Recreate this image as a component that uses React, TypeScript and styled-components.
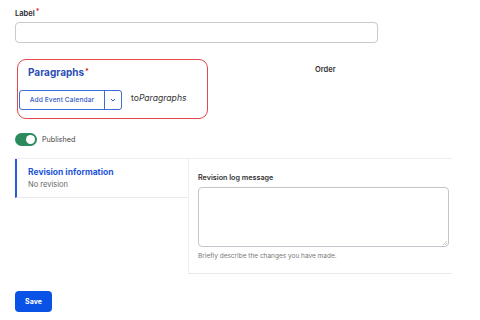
import styled, { createGlobalStyle } from "styled-components"

const GlobalStyle = createGlobalStyle`
  body {
    margin: 0;
    background: #fff;
    font-family: Inter, "Noto Sans", sans-serif;
    color: #222330;
  }
`

const Page = styled.div`
  width: 480px;
  height: 320px;
  padding: 7px 0 0 15px;
  box-sizing: border-box;
  overflow: hidden;
`

const FieldLabel = styled.div`
  font-size: 7.5px;
  font-weight: 600;
  line-height: 10px;
  color: #232429;
`

const Required = styled.span`
  color: #d72222;
  font-size: 7px;
  margin-left: 1px;
  vertical-align: 2px;
`

const TextInput = styled.div`
  margin-top: 3px;
  width: 363px;
  height: 21px;
  box-sizing: border-box;
  border: 1px solid #c9c9cf;
  border-radius: 4px;
`

const ParagraphsRow = styled.div`
  margin-top: 16px;
  display: flex;
  align-items: flex-start;
`

const Highlight = styled.div`
  margin-left: 2px;
  width: 191px;
  height: 60px;
  box-sizing: border-box;
  border: 1.3px solid #e2484e;
  border-radius: 9px;
  padding: 6px 0 0 1px;
`

const TableHeading = styled.div`
  font-size: 10px;
  font-weight: 700;
  color: #2a4db8;
  margin-left: 9px;
  line-height: 12px;
`

const AddRow = styled.div`
  margin-top: 12px;
  display: flex;
  align-items: flex-start;
  gap: 9px;
`

const ButtonGroup = styled.div`
  display: flex;
  width: 103px;
  height: 20px;
  box-sizing: border-box;
  border: 1.3px solid #3a6fd8;
  border-radius: 3px;
`

const AddButton = styled.div`
  flex: 1;
  display: flex;
  align-items: center;
  justify-content: center;
  font-size: 6.6px;
  font-weight: 500;
  letter-spacing: 0.1px;
  color: #2f5cc4;
  border-right: 1px solid #3a6fd8;
`

const ToggleButton = styled.div`
  width: 16px;
  display: flex;
  align-items: center;
  justify-content: center;
  color: #2f5cc4;
`

const ToText = styled.div`
  font-size: 8.6px;
  color: #333;
  margin-top: 3px;
  em {
    font-style: italic;
  }
`

const OrderHeading = styled.div`
  margin-left: 107px;
  margin-top: 6px;
  font-size: 7.5px;
  font-weight: 600;
  color: #333;
`

const StatusRow = styled.div`
  margin-top: 14px;
  display: flex;
  align-items: center;
  gap: 5px;
  font-size: 7.2px;
  color: #444;
`

const Switch = styled.div<{ $on: boolean }>`
  width: 22px;
  height: 13px;
  border-radius: 7px;
  background: ${p => (p.$on ? "#2b8a5e" : "#ccc")};
  position: relative;
  &::after {
    content: "";
    position: absolute;
    top: 2px;
    left: ${p => (p.$on ? "11px" : "2px")};
    width: 9px;
    height: 9px;
    border-radius: 50%;
    background: #fff;
  }
`

const Tabs = styled.div`
  margin-top: 12px;
  width: 437px;
  display: flex;
  border-top: 1px solid #eeeef2;
`

const TabMenu = styled.div`
  width: 173px;
`

const TabItem = styled.div`
  border-left: 2px solid #2a5ad8;
  border-bottom: 1px solid #e8e8ee;
  padding: 8px 0 6px 11px;
  height: 39px;
  box-sizing: border-box;
`

const TabTitle = styled.div`
  font-size: 8.5px;
  font-weight: 700;
  color: #1e55d8;
  line-height: 11px;
`

const TabSummary = styled.div`
  font-size: 7.5px;
  color: #666;
  line-height: 10px;
  margin-top: 2px;
`

const TabPane = styled.div`
  flex: 1;
  height: 115px;
  box-sizing: border-box;
  border-left: 1px solid #eeeef2;
  border-bottom: 1px solid #e8e8ee;
  padding: 14px 0 0 9px;
`

const PaneLabel = styled.div`
  font-size: 7.2px;
  font-weight: 600;
  color: #333;
  line-height: 10px;
`

const TextArea = styled.div`
  margin-top: 4px;
  width: 251px;
  height: 60px;
  box-sizing: border-box;
  border: 1px solid #c4c4cc;
  border-radius: 4px;
  position: relative;
`

const Grip = styled.svg`
  position: absolute;
  right: 1px;
  bottom: 1px;
`

const HelpText = styled.div`
  margin-top: 5px;
  font-size: 6.5px;
  color: #777;
`

const SaveButton = styled.div`
  margin-top: 17px;
  width: 37px;
  height: 21px;
  border-radius: 4px;
  background: #0a52e6;
  color: #fff;
  font-size: 7px;
  font-weight: 700;
  display: flex;
  align-items: center;
  justify-content: center;
`

const App = () => {
  return (
    <Page>
      <GlobalStyle />
      <FieldLabel>
        Label<Required>*</Required>
      </FieldLabel>
      <TextInput />
      <ParagraphsRow>
        <Highlight>
          <TableHeading>
            Paragraphs<Required>*</Required>
          </TableHeading>
          <AddRow>
            <ButtonGroup>
              <AddButton>Add Event Calendar</AddButton>
              <ToggleButton>
                <svg width="6" height="4" viewBox="0 0 6 4">
                  <path d="M1 1l2 2 2-2" fill="none" stroke="currentColor" strokeWidth="1" />
                </svg>
              </ToggleButton>
            </ButtonGroup>
            <ToText>
              to<em>Paragraphs</em>
            </ToText>
          </AddRow>
        </Highlight>
        <OrderHeading>Order</OrderHeading>
      </ParagraphsRow>
      <StatusRow>
        <Switch $on />
        Published
      </StatusRow>
      <Tabs>
        <TabMenu>
          <TabItem>
            <TabTitle>Revision information</TabTitle>
            <TabSummary>No revision</TabSummary>
          </TabItem>
        </TabMenu>
        <TabPane>
          <PaneLabel>Revision log message</PaneLabel>
          <TextArea>
            <Grip width="4" height="4" viewBox="0 0 4 4">
              <path d="M0 4L4 0M2 4L4 2" stroke="#aaa" strokeWidth="0.6" />
            </Grip>
          </TextArea>
          <HelpText>Briefly describe the changes you have made.</HelpText>
        </TabPane>
      </Tabs>
      <SaveButton>Save</SaveButton>
    </Page>
  )
}

export default App
